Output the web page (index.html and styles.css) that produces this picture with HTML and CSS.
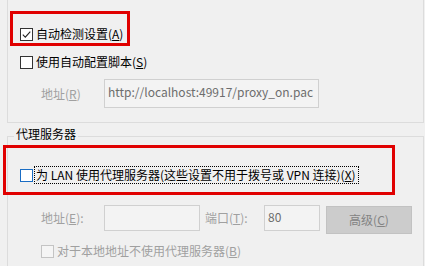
FILE: index.html
```html
<!DOCTYPE html>
<html lang="zh-CN">
<head>
<meta charset="utf-8">
<title>局域网(LAN)设置</title>
<link rel="stylesheet" href="styles.css">
</head>
<body>
<div class="page">
  <div class="group group-top">
    <div class="row row-auto">
      <span class="box checked">
        <svg viewBox="0 0 11 11" width="11" height="11"><path d="M1.8 5.6 L4.3 8.1 L9.3 2.6" fill="none" stroke="#202020" stroke-width="1.1"/></svg>
      </span>
      <span class="label">自动检测设置(<u>A</u>)</span>
      <span class="mark mark-auto"></span>
    </div>
    <div class="row row-script">
      <span class="box"></span>
      <span class="label">使用自动配置脚本(<u>S</u>)</span>
    </div>
    <div class="field-row">
      <span class="field-label disabled">地址(<u>R</u>)</span>
      <span class="input input-wide">http://localhost:49917/proxy_on.pac</span>
    </div>
  </div>

  <div class="group group-proxy">
    <div class="legend">代理服务器</div>
    <div class="row row-lan">
      <span class="box focus"></span>
      <span class="label focus-ring">为 LAN 使用代理服务器(这些设置不用于拨号或 VPN 连接)(<u>X</u>)</span>
      <span class="mark mark-lan"></span>
    </div>
    <div class="field-row field-proxy">
      <span class="field-label disabled">地址(<u>E</u>):</span>
      <span class="input input-addr"></span>
      <span class="field-label port-label disabled">端口(<u>T</u>):</span>
      <span class="input input-port">80</span>
      <span class="button">高级(<u>C</u>)</span>
    </div>
    <div class="row row-bypass">
      <span class="box disabled-box"></span>
      <span class="label disabled">对于本地地址不使用代理服务器(<u>B</u>)</span>
    </div>
  </div>
</div>
</body>
</html>
```
FILE: styles.css
```css
html, body {
  margin: 0;
  padding: 0;
  background: #f0f0f0;
}
.page {
  position: relative;
  width: 425px;
  height: 266px;
  overflow: hidden;
  background: #f0f0f0;
  font-family: "Noto Sans CJK SC", "Noto Sans", sans-serif;
  font-size: 12px;
  color: #000;
}
u {
  text-decoration: underline;
  text-underline-offset: 1px;
}
.group {
  margin: 0 1px 0 7px;
  border: 1px solid #dcdcdc;
  box-sizing: border-box;
  padding-left: 12px;
}
.group-top {
  border-top: none;
  height: 123px;
  padding-top: 24px;
}
.group-proxy {
  border-bottom: none;
  margin-top: 13px;
  height: 130px;
}
.legend {
  width: fit-content;
  margin: -11px 0 0 -6px;
  padding: 0 2px;
  line-height: 16px;
  background: #f0f0f0;
}
.row {
  position: relative;
  display: flex;
  align-items: center;
  height: 20px;
  line-height: 20px;
  white-space: nowrap;
}
.row-script {
  margin-top: 8px;
}
.row-lan {
  margin-top: 23px;
}
.row-bypass {
  margin-top: 7px;
  padding-left: 21px;
}
.box {
  display: flex;
  align-items: center;
  justify-content: center;
  width: 13px;
  height: 13px;
  box-sizing: border-box;
  border: 1px solid #333;
  background: #fff;
  margin-right: 3px;
  flex: none;
}
.box.focus {
  border-color: #1a6dc4;
  margin-right: 1px;
}
.box.disabled-box {
  border-color: #c4c4c4;
  background: #f5f5f5;
}
.focus-ring {
  line-height: 16px;
  padding: 0 2px 0 1px;
  border: 1px dotted #000;
}
.disabled {
  color: #a0a0a0;
}
.mark {
  position: absolute;
  border: 3px solid #e00000;
  box-sizing: border-box;
  pointer-events: none;
}
.mark-auto {
  left: -10px;
  top: -13px;
  width: 120px;
  height: 35px;
}
.mark-lan {
  left: -17px;
  top: -20px;
  width: 392px;
  height: 50px;
}
.field-row {
  display: flex;
  align-items: center;
  margin-top: 7px;
  padding-left: 21px;
  white-space: nowrap;
}
.field-label {
  width: 63px;
  flex: none;
}
.input {
  box-sizing: border-box;
  height: 29px;
  border: 1px solid #d0d0d0;
  background: #f3f3f3;
  color: #6d6d6d;
  padding: 0 3px;
  line-height: 24px;
  flex: none;
}
.input-wide {
  width: 215px;
}
.field-proxy {
  margin-top: 20px;
  align-items: flex-start;
}
.field-proxy .field-label {
  line-height: 26px;
}
.input-addr {
  width: 96px;
  height: 26px;
}
.port-label {
  margin-left: 5px;
  width: 59px;
}
.input-port {
  width: 56px;
  height: 26px;
  line-height: 22px;
}
.button {
  box-sizing: border-box;
  width: 86px;
  height: 28px;
  margin: 1px 0 0 6px;
  background: #cccccc;
  border: 1px solid #c2c2c2;
  color: #838383;
  text-align: center;
  line-height: 26px;
  flex: none;
}
```
